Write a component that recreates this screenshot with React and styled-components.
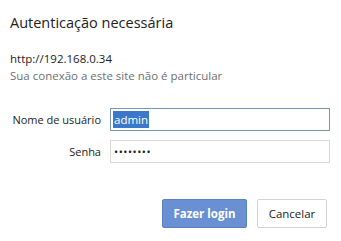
import styled, { createGlobalStyle } from "styled-components";

const GlobalStyle = createGlobalStyle`
  html, body {
    margin: 0;
    background: #ffffff;
  }
  body {
    font-family: "Open Sans", "Noto Sans", sans-serif;
    color: #222;
  }
`;

const Dialog = styled.div`
  width: 341px;
  height: 241px;
  box-sizing: border-box;
  padding: 13px 14px 0 10px;
  display: flex;
  flex-direction: column;
`;

const Title = styled.h1`
  margin: 0;
  font-size: 14.5px;
  font-weight: 400;
  line-height: 20px;
  color: #222;
`;

const Origin = styled.div`
  font-size: 11.5px;
  line-height: 17px;
  color: ${(p) => (p.muted ? "#6f6f6f" : "#222")};
  margin-top: ${(p) => (p.muted ? "0" : "17px")};
`;

const Form = styled.div`
  margin-top: 24px;
  display: grid;
  grid-template-columns: 91px 220px;
  column-gap: 9px;
  row-gap: 9px;
  align-items: center;
`;

const Label = styled.label`
  font-size: 11px;
  white-space: nowrap;
  text-align: right;
  color: #222;
`;

const Field = styled.div`
  height: 23px;
  box-sizing: border-box;
  border: 1px solid ${(p) => (p.focused ? "#7895b4" : "#d9d9d9")};
  display: flex;
  align-items: center;
  padding-left: 2px;
  font-size: 11.5px;
`;

const Selected = styled.span`
  background: #3b78cc;
  color: #fff;
  padding: 0 1px;
  line-height: 17px;
`;

const Dots = styled.span`
  font-size: 11px;
  letter-spacing: 0.5px;
  padding-left: 1px;
  color: #222;
`;

const Actions = styled.div`
  margin-top: 36px;
  display: flex;
  justify-content: flex-end;
  gap: 10px;
`;

const Button = styled.button`
  height: 29px;
  box-sizing: border-box;
  font-family: "Open Sans", "Noto Sans", sans-serif;
  font-size: 11.5px;
  border-radius: 2px;
  padding: 0;
  width: ${(p) => p.w}px;
  ${(p) =>
    p.primary
      ? `
    background: #6890d2;
    border: 1px solid #5a80c0;
    color: #fff;
    font-weight: 700;
  `
      : `
    background: #ffffff;
    border: 1px solid #d2d2d2;
    color: #222;
  `}
`;

export default function App() {
  return (
    <>
      <GlobalStyle />
      <Dialog>
        <Title>Autenticação necessária</Title>
        <Origin>http://192.168.0.34</Origin>
        <Origin muted>Sua conexão a este site não é particular</Origin>
        <Form>
          <Label>Nome de usuário</Label>
          <Field focused>
            <Selected>admin</Selected>
          </Field>
          <Label>Senha</Label>
          <Field>
            <Dots>••••••••</Dots>
          </Field>
        </Form>
        <Actions>
          <Button primary w={85}>Fazer login</Button>
          <Button w={70}>Cancelar</Button>
        </Actions>
      </Dialog>
    </>
  );
}
